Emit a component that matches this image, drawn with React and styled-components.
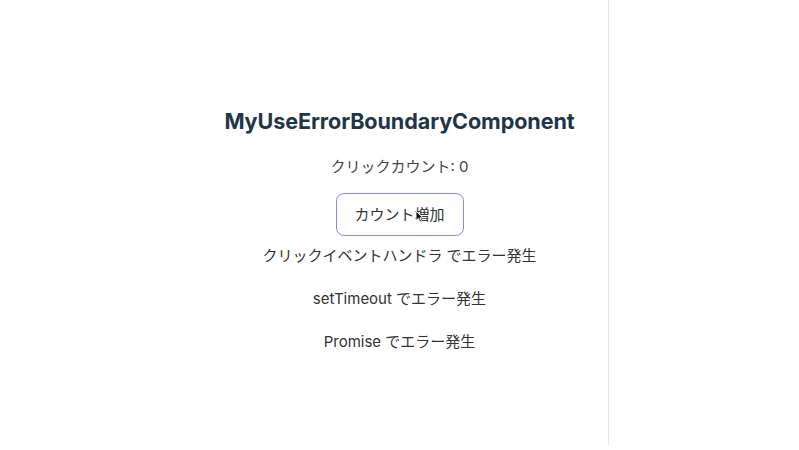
import React, { useState } from "react";
import styled, { createGlobalStyle } from "styled-components";

const GlobalStyle = createGlobalStyle`
  html, body {
    margin: 0;
    padding: 0;
    background: #ffffff;
  }
  body {
    font-family: Inter, "Noto Sans CJK JP", "Liberation Sans", sans-serif;
    color: #213547;
    -webkit-font-smoothing: antialiased;
  }
`;

function App() {
  const [count, setCount] = useState(0);

  return (
    <Page>
      <GlobalStyle />
      <Content>
        <Title>MyUseErrorBoundaryComponent</Title>
        <CountText>クリックカウント: {count}</CountText>
        <ButtonWrap>
          <CountButton onClick={() => setCount(count + 1)}>カウント増加</CountButton>
          <Cursor width="9" height="13" viewBox="0 0 9 13">
            <path
              d="M1 1 L1 10.5 L3.3 8.4 L5 12 L6.5 11.3 L4.9 7.8 L8 7.8 Z"
              fill="#111"
              stroke="#fff"
              strokeWidth="0.9"
              strokeLinejoin="round"
            />
          </Cursor>
        </ButtonWrap>
        <ErrorLine first>クリックイベントハンドラ でエラー発生</ErrorLine>
        <ErrorLine>setTimeout でエラー発生</ErrorLine>
        <ErrorLine>Promise でエラー発生</ErrorLine>
      </Content>
      <Divider />
    </Page>
  );
}

export default App;

const Page = styled.div`
  position: relative;
  width: 799px;
  height: 450px;
  overflow: hidden;
`;

const Content = styled.div`
  display: flex;
  flex-direction: column;
  align-items: center;
  padding-top: 106px;
`;

const Title = styled.h1`
  margin: 0;
  font-size: 21.6px;
  line-height: 30px;
  font-weight: 700;
  letter-spacing: -0.1px;
  color: #213547;
`;

const CountText = styled.p`
  margin: 21px 0 0;
  font-size: 15px;
  line-height: 20px;
  color: #444444;
`;

const ButtonWrap = styled.div`
  position: relative;
  margin-top: 16px;
`;

const CountButton = styled.button`
  display: block;
  box-sizing: border-box;
  width: 128px;
  height: 43px;
  border: 1px solid #858af0;
  border-radius: 8px;
  background: #ffffff;
  font-family: inherit;
  font-size: 15px;
  line-height: 20px;
  color: #333333;
  cursor: pointer;
`;

const Cursor = styled.svg`
  position: absolute;
  left: 79px;
  top: 17px;
  pointer-events: none;
`;

const ErrorLine = styled.p`
  margin: ${(p) => (p.first ? "10px" : "23px")} 0 0;
  font-size: 15px;
  line-height: 20px;
  color: #333333;
`;

const Divider = styled.div`
  position: absolute;
  left: 608px;
  top: 0;
  width: 1px;
  height: 445px;
  background: #e6e6e6;
`;
